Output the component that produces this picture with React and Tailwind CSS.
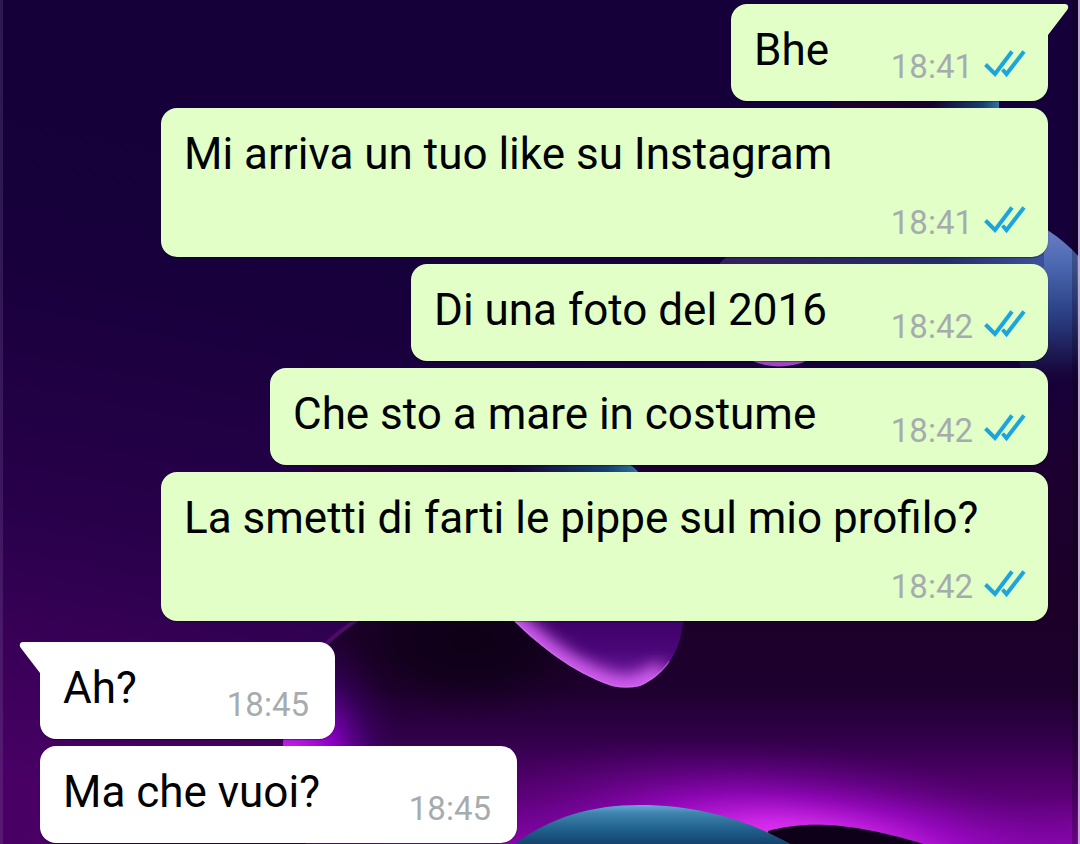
import clsx from "clsx";

const messages = [
  { text: "Bhe", time: "18:41", out: true, tail: true, width: "w-[317px]" },
  { text: "Mi arriva un tuo like su Instagram", time: "18:41", out: true, tall: true, width: "w-[88%]" },
  { text: "Di una foto del 2016", time: "18:42", out: true, width: "w-[637px]" },
  { text: "Che sto a mare in costume", time: "18:42", out: true, width: "w-[778px]" },
  { text: "La smetti di farti le pippe sul mio profilo?", time: "18:42", out: true, tall: true, width: "w-[88%]" },
  { text: "Ah?", time: "18:45", tail: true, width: "w-[295px]" },
  { text: "Ma che vuoi?", time: "18:45", width: "w-[477px]" },
];

function Wallpaper() {
  return (
    <svg
      className="absolute inset-0 h-full w-full"
      viewBox="0 0 1080 844"
      preserveAspectRatio="none"
      aria-hidden="true"
    >
      <defs>
        <linearGradient id="sky" x1="0.6" y1="0" x2="0.35" y2="1">
          <stop offset="0" stopColor="#150039" />
          <stop offset="0.4" stopColor="#17003b" />
          <stop offset="0.7" stopColor="#28004a" />
          <stop offset="1" stopColor="#480064" />
        </linearGradient>
        <linearGradient id="cave" x1="0" y1="0" x2="0" y2="1">
          <stop offset="0" stopColor="#1c0029" />
          <stop offset="0.35" stopColor="#1e002e" />
          <stop offset="0.55" stopColor="#300048" />
          <stop offset="0.8" stopColor="#5a0074" />
          <stop offset="1" stopColor="#9406b8" />
        </linearGradient>
        <radialGradient id="shade" gradientUnits="userSpaceOnUse" cx="0" cy="0" r="1" gradientTransform="translate(470 640) scale(150 80)">
          <stop offset="0" stopColor="#0e0016" />
          <stop offset="0.5" stopColor="#10001a" stopOpacity="0.8" />
          <stop offset="1" stopColor="#1c0029" stopOpacity="0" />
        </radialGradient>
        <radialGradient id="rim" gradientUnits="userSpaceOnUse" cx="0" cy="0" r="1" gradientTransform="translate(286 765) scale(125 150)">
          <stop offset="0" stopColor="#d82cf4" />
          <stop offset="0.4" stopColor="#9400d2" stopOpacity="0.9" />
          <stop offset="0.7" stopColor="#4a0080" stopOpacity="0.45" />
          <stop offset="1" stopColor="#2a0040" stopOpacity="0" />
        </radialGradient>
        <radialGradient id="glow" gradientUnits="userSpaceOnUse" cx="0" cy="0" r="1" gradientTransform="translate(800 848) rotate(6) scale(350 105)">
          <stop offset="0" stopColor="#f040f6" />
          <stop offset="0.25" stopColor="#d028ea" stopOpacity="0.95" />
          <stop offset="0.5" stopColor="#9a08c4" stopOpacity="0.75" />
          <stop offset="0.75" stopColor="#6c0492" stopOpacity="0.4" />
          <stop offset="1" stopColor="#4a0068" stopOpacity="0" />
        </radialGradient>
        <linearGradient id="lobe" gradientUnits="userSpaceOnUse" x1="0" y1="612" x2="0" y2="688">
          <stop offset="0" stopColor="#3a0064" />
          <stop offset="0.5" stopColor="#4a0678" />
          <stop offset="1" stopColor="#7c20a8" />
        </linearGradient>
        <clipPath id="lobeClip">
          <path d="M505 612C534 642 570 672 612 686Q626 689 640 686C666 674 682 652 684 612Z" />
        </clipPath>
        <filter id="soft" x="-20%" y="-50%" width="140%" height="200%">
          <feGaussianBlur stdDeviation="8" />
        </filter>
        <linearGradient id="ball" x1="0" y1="0" x2="0" y2="1">
          <stop offset="0" stopColor="#6aa5d8" />
          <stop offset="0.2" stopColor="#3f84ac" />
          <stop offset="0.6" stopColor="#1f608c" />
          <stop offset="1" stopColor="#143e6a" />
        </linearGradient>
        <linearGradient id="planet" gradientUnits="userSpaceOnUse" x1="0" y1="220" x2="0" y2="390">
          <stop offset="0" stopColor="#7382c8" />
          <stop offset="0.25" stopColor="#4c6ab2" />
          <stop offset="0.55" stopColor="#2b4084" />
          <stop offset="0.85" stopColor="#190f45" />
          <stop offset="1" stopColor="#1c0030" stopOpacity="0" />
        </linearGradient>
        <linearGradient id="planetShade" gradientUnits="userSpaceOnUse" x1="720" y1="0" x2="1040" y2="0">
          <stop offset="0" stopColor="#33205e" />
          <stop offset="0.7" stopColor="#242c66" />
          <stop offset="1" stopColor="#3c509a" />
        </linearGradient>
        <linearGradient id="streak" x1="0" y1="0" x2="1" y2="0">
          <stop offset="0" stopColor="#2a0020" stopOpacity="0.4" />
          <stop offset="0.6" stopColor="#170030" />
          <stop offset="0.9" stopColor="#173f6e" />
          <stop offset="1" stopColor="#3472a0" />
        </linearGradient>
        <linearGradient id="dusk" gradientUnits="userSpaceOnUse" x1="0" y1="370" x2="0" y2="620">
          <stop offset="0" stopColor="#1c0030" stopOpacity="0" />
          <stop offset="0.4" stopColor="#1c0030" />
          <stop offset="1" stopColor="#1c0029" />
        </linearGradient>
      </defs>

      <rect width="1080" height="844" fill="url(#sky)" />

      {/* upper right shapes, seen between the bubbles */}
      <rect x="830" y="98" width="169" height="12" fill="url(#streak)" />
      <rect x="640" y="370" width="440" height="260" fill="url(#dusk)" />
      <path d="M960 210C1010 207 1050 224 1080 258V390H1030Z" fill="url(#planet)" />
      <path d="M718 266C722 259 730 254 740 250H1044V268Z" fill="url(#planetShade)" />
      <path d="M745 356C762 370 795 370 815 356Z" fill="#a344c4" />
      <path d="M310 462H625Q634 466 640 474H310Z" fill="url(#streak)" />

      {/* dark hollow with its lit edge */}
      <path d="M372 606C318 640 284 684 283 744C284 790 294 822 306 844H1080V606Z" fill="url(#cave)" />
      <rect x="350" y="610" width="300" height="120" fill="url(#shade)" />
      <path d="M372 606C318 640 284 684 283 744C284 790 294 822 306 844H480V606Z" fill="url(#rim)" />
      <path d="M366 614C338 631 312 652 300 680" fill="none" stroke="#6a1290" strokeWidth="4" strokeOpacity="0.6" />
      <rect x="380" y="700" width="700" height="144" fill="url(#glow)" />

      <g clipPath="url(#lobeClip)">
        <rect x="500" y="606" width="190" height="86" fill="url(#lobe)" />
        <path d="M490 600C534 642 570 672 612 686Q626 689 640 686L664 672" fill="none" stroke="#d864f4" strokeWidth="22" filter="url(#soft)" />
        <path d="M505 612C534 642 570 672 612 686Q626 689 640 686C652 681 662 673 670 662" fill="none" stroke="#d070f0" strokeWidth="3" strokeOpacity="0.6" />
      </g>

      <path d="M768 831C805 821 850 821 930 846H770Z" fill="#0d0018" />
      <path d="M512 846C548 818 590 805 640 805C700 805 750 821 794 846Z" fill="url(#ball)" />

      {/* screen edges */}
      <rect width="3" height="844" fill="#8060a0" fillOpacity="0.25" />
      <rect x="1072" width="5" height="844" fill="#08000f" fillOpacity="0.25" />
      <rect x="1078" width="2" height="844" fill="#cdb8dc" fillOpacity="0.9" />
    </svg>
  );
}

function ReadTicks() {
  return (
    <svg className="mb-2 h-7 w-[42px]" viewBox="0 0 42 28" fill="none" stroke="#1ba5dc" strokeWidth="4" role="img" aria-label="Letto">
      <path d="M1.500 14.500L11 24L28 1.500" />
      <path d="M18.500 19.500L22.500 24L40 1.500" />
    </svg>
  );
}

function Tail({ out }) {
  return (
    <svg
      className={clsx("absolute top-0 h-[33px] w-[22px]", out ? "-right-[21px] fill-[#e1ffc7]" : "-left-[21px] -scale-x-100 fill-white")}
      viewBox="0 0 22 33"
      aria-hidden="true"
    >
      <path d="M0 0H18C21 0 22 3 20.500 5.500L1 31V33H0Z" />
    </svg>
  );
}

function Bubble({ text, time, out, tail, tall, width }) {
  return (
    <li
      className={clsx(
        "relative flex max-w-full rounded-2xl pb-[15px] pl-[23px] shadow-[0_1px_1px_rgba(0,0,0,0.35)]",
        width,
        out ? "self-end bg-[#e1ffc7] pr-[22px]" : "self-start bg-white pr-[26px]",
        tail && (out ? "rounded-tr-none" : "mt-[14px] rounded-tl-none"),
        tall ? "flex-col gap-[14px]" : "items-end justify-between"
      )}
    >
      {tail && <Tail out={out} />}
      <p className="pt-5 pb-[10px] text-[44px] leading-[52px] text-black">{text}</p>
      <div className="flex items-end gap-[11px] self-end">
        <time className="text-[33px] leading-[38px] text-[#a6acae]">{time}</time>
        {out && <ReadTicks />}
      </div>
    </li>
  );
}

export default function App() {
  return (
    <main className="relative min-h-screen overflow-hidden bg-[#150039] font-['Roboto','Liberation_Sans',sans-serif]">
      <Wallpaper />
      <ul className="relative flex flex-col gap-[7px] pt-1 pr-8 pl-10">
        {messages.map((message) => (
          <Bubble key={message.text} {...message} />
        ))}
      </ul>
    </main>
  );
}
